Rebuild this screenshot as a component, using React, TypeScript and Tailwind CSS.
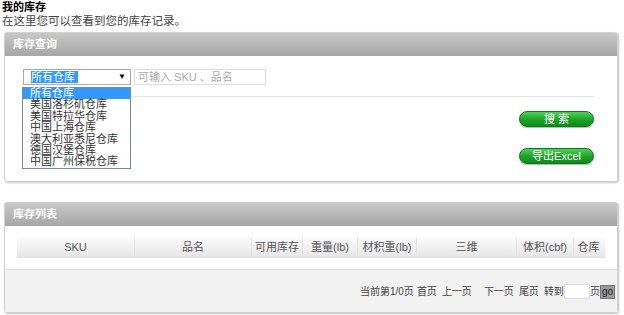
import React from "react";

const warehouses = [
  "所有仓库",
  "美国洛杉矶仓库",
  "美国特拉华仓库",
  "中国上海仓库",
  "澳大利亚悉尼仓库",
  "德国汉堡仓库",
  "中国广州保税仓库",
];

const columns = [
  { label: "SKU", w: "w-[118px]" },
  { label: "品名", w: "w-[117px]" },
  { label: "可用库存", w: "w-[51px]" },
  { label: "重量(lb)", w: "w-[55px]" },
  { label: "材积重(lb)", w: "w-[59px]" },
  { label: "三维", w: "w-[100px]" },
  { label: "体积(cbf)", w: "w-[57px]" },
  { label: "仓库", w: "w-[29px]" },
];

const PanelHeader: React.FC<{ title: string }> = ({ title }) => (
  <div className="h-[23px] flex items-center pl-[8px] bg-gradient-to-b from-[#c8c8c8] to-[#a6a6a6] text-white text-[11px] font-bold">
    {title}
  </div>
);

const GreenButton: React.FC<{ children: React.ReactNode }> = ({ children }) => (
  <button className="w-[75px] h-[16px] rounded-full border border-[#0d7a1a] bg-gradient-to-b from-[#4fd05a] via-[#1fa52d] to-[#0e8a1c] text-white text-[11px] leading-[14px] shadow-[0_1px_1px_rgba(0,0,0,0.3)]">
    {children}
  </button>
);

export default function App() {
  return (
    <div
      className="w-[624px] h-[315px] overflow-hidden bg-white text-[#333]"
      style={{ fontFamily: "'Liberation Sans', 'Noto Sans CJK SC', sans-serif" }}
    >
      <div className="px-[2px] pt-[1px]">
        <h1 className="text-[11px] leading-[13px] font-bold text-black">我的库存</h1>
        <p className="text-[11.5px] leading-[14px] text-[#444]">在这里您可以查看到您的库存记录。</p>
      </div>

      {/* 库存查询 */}
      <div className="mt-[4px] ml-[4px] mr-[6px] border border-[#d0d0d0] rounded-[3px] shadow-[1px_1px_2px_rgba(0,0,0,0.25)]">
        <PanelHeader title="库存查询" />
        <div className="relative h-[125px] pt-[13px] pl-[18px] pr-[23px]">
          <div className="flex gap-[3px]">
            <div className="w-[108px] h-[16px] border border-[#aaa] bg-white flex items-center pl-[7px] pr-[4px] text-[11px]">
              <span className="bg-[#3399ff] text-white leading-[12px] w-[47px]">所有仓库</span>
              <span className="ml-auto text-[8px] text-black">▼</span>
            </div>
            <div className="w-[132px] h-[16px] border border-[#ddd] bg-white flex items-center pl-[3px] text-[11px] text-[#aaa]">
              可输入 SKU 、品名
            </div>
          </div>
          <div className="mt-[11px] border-t border-[#e4e4e4]" />
          <div className="flex flex-col items-end gap-[21px] mt-[14px]">
            <GreenButton>搜 索</GreenButton>
            <GreenButton>导出Excel</GreenButton>
          </div>

          <ul className="absolute left-[17px] top-[31px] w-[109px] border border-[#7a8a99] bg-white text-[11px] leading-[11.4px] text-[#333]">
            {warehouses.map((w, i) => (
              <li
                key={w}
                className={i === 0 ? "bg-[#3399ff] text-white pl-[7px]" : "pl-[7px]"}
              >
                {w}
              </li>
            ))}
          </ul>
        </div>
      </div>

      {/* 库存列表 */}
      <div className="mt-[20px] ml-[4px] mr-[6px] border border-[#d0d0d0] rounded-[3px] shadow-[1px_1px_2px_rgba(0,0,0,0.25)]">
        <PanelHeader title="库存列表" />
        <div className="pt-[12px] px-[12px] pb-[11px]">
          <div className="flex h-[20px] bg-gradient-to-b from-[#fafafa] to-[#e6e6e6] border-b border-[#e0e0e0]">
            {columns.map((c, i) => (
              <div
                key={c.label}
                className={`${c.w} flex items-center justify-center text-[11px] text-[#555] ${
                  i < columns.length - 1 ? "border-r border-[#e2e2e2]" : ""
                }`}
              >
                {c.label}
              </div>
            ))}
          </div>
        </div>
        <div className="h-[43px] bg-[#f2f2f2] border-t border-[#dedede] flex items-center justify-end pr-[2px] pt-[1px] text-[10px] text-[#444]">
          <span>当前第1/0页</span>
          <span className="ml-[3px]">首页</span>
          <span className="ml-[5px]">上一页</span>
          <span className="ml-[12px]">下一页</span>
          <span className="ml-[5px]">尾页</span>
          <span className="ml-[5px]">转到</span>
          <span className="w-[26px] h-[15px] bg-white border border-[#ddd]" />
          <span>页</span>
          <span className="bg-[#999] text-[#222] leading-[12px] px-[1px] border border-[#777]">go</span>
        </div>
      </div>
    </div>
  );
}
